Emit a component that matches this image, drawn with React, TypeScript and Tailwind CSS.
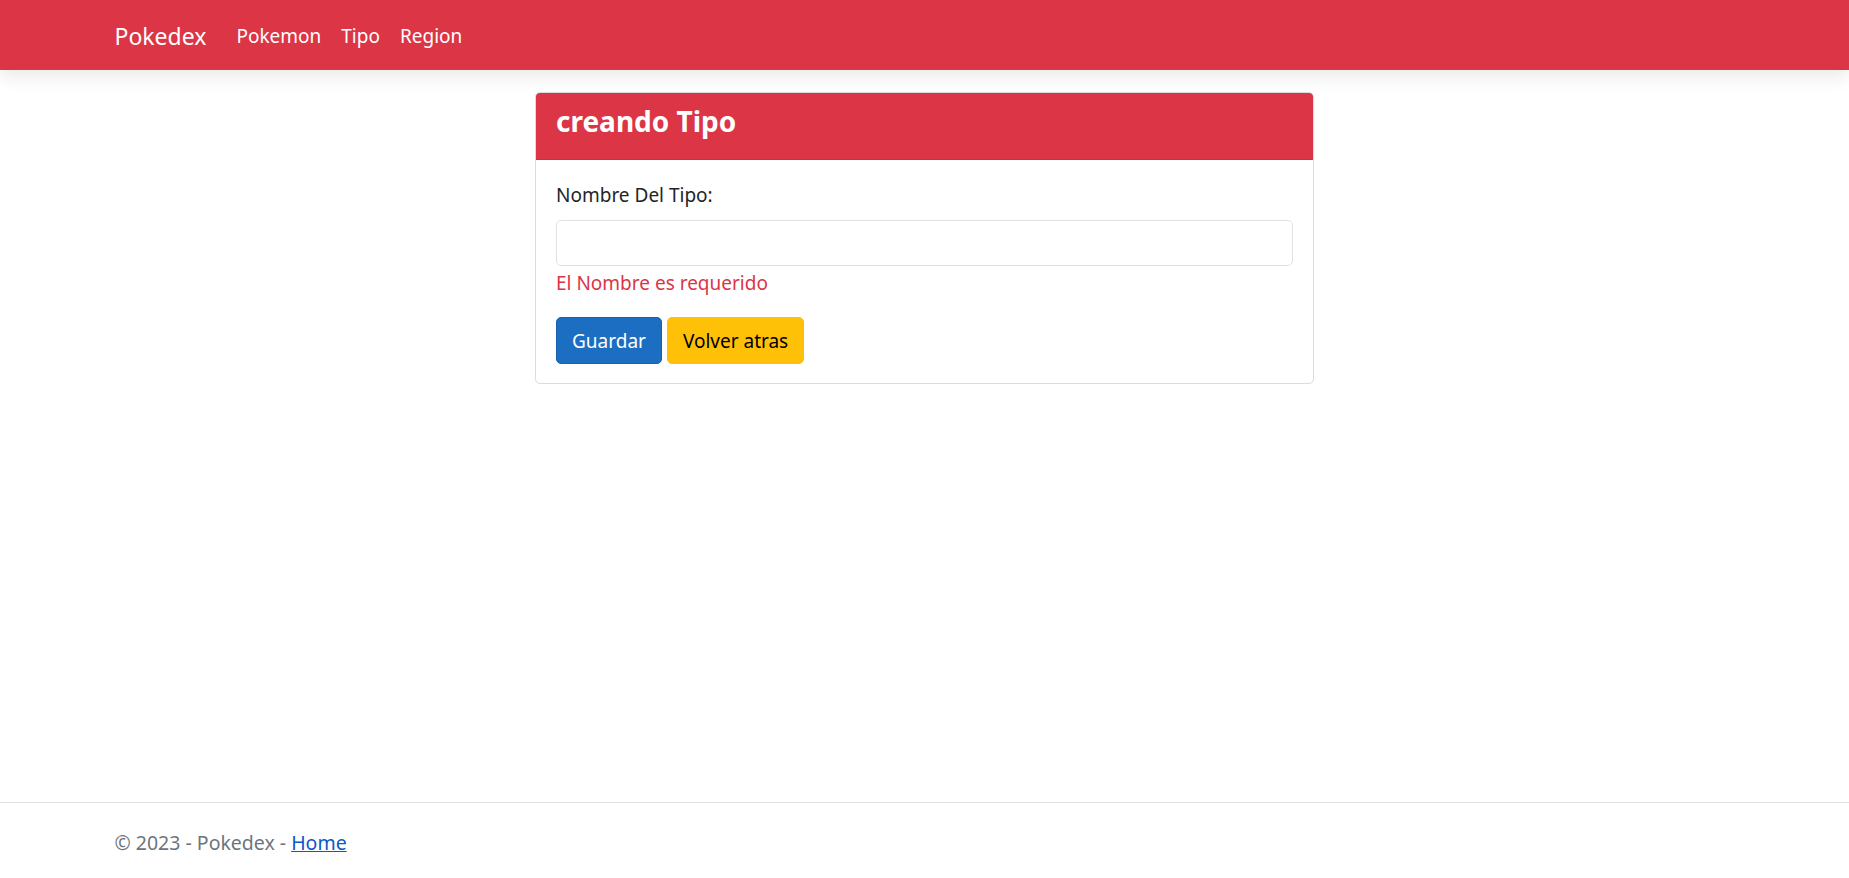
export default function App() {
  return (
    <div className="min-h-[878px] flex flex-col bg-white text-[#212529] font-['Noto_Sans',sans-serif] text-[19px] leading-[30px]">
      {/* Navbar */}
      <nav className="h-[70px] bg-[#dc3545] shadow-[0_8px_16px_rgba(0,0,0,0.08)] mb-[22px] relative z-10">
        <div className="max-w-[1650px] mx-auto px-[15px] h-full flex items-center pt-[2px]">
          <a href="#" className="text-white text-[23px] mr-[20px] leading-[37px] py-[6px]">
            Pokedex
          </a>
          <ul className="flex">
            <li><a href="#" className="block px-[10px] text-white">Pokemon</a></li>
            <li><a href="#" className="block px-[10px] text-white">Tipo</a></li>
            <li><a href="#" className="block px-[10px] text-white">Region</a></li>
          </ul>
        </div>
      </nav>

      {/* Main */}
      <main className="flex-1 flex justify-center">
        <div className="w-[779px] self-start border border-[#dadcdf] rounded-[5px] overflow-hidden">
          <div className="bg-[#dc3545] px-[20px] pt-[10px] pb-[20px] border-b border-[#c9303e]">
            <h4 className="text-white text-[28px] font-bold leading-[36px]">creando Tipo</h4>
          </div>
          <div className="p-[20px] pb-[19px]">
            <label className="block mb-[10px]">Nombre Del Tipo:</label>
            <input
              type="text"
              className="block w-full h-[46px] border border-[#dee2e6] rounded-[5px] px-[15px] outline-none"
            />
            <span className="block mt-[2px] text-[#dc3545]">El Nombre es requerido</span>
            <div className="flex gap-[5px] mt-[19px]">
              <button className="h-[47px] px-[15px] rounded-[5px] bg-[#1b6ec2] border border-[#1861ac] text-white">
                Guardar
              </button>
              <button className="h-[47px] px-[15px] rounded-[5px] bg-[#ffc107] border border-[#ffc107] text-black">
                Volver atras
              </button>
            </div>
          </div>
        </div>
      </main>

      {/* Footer */}
      <footer className="h-[76px] border-t border-[#dee2e6] text-[#6c757d] text-[19.5px]">
        <div className="max-w-[1650px] mx-auto px-[15px] h-full flex items-center pt-[4px]">
          <span>
            © 2023 - Pokedex - <a href="#" className="text-[#0a58ca] underline">Home</a>
          </span>
        </div>
      </footer>
    </div>
  );
}
